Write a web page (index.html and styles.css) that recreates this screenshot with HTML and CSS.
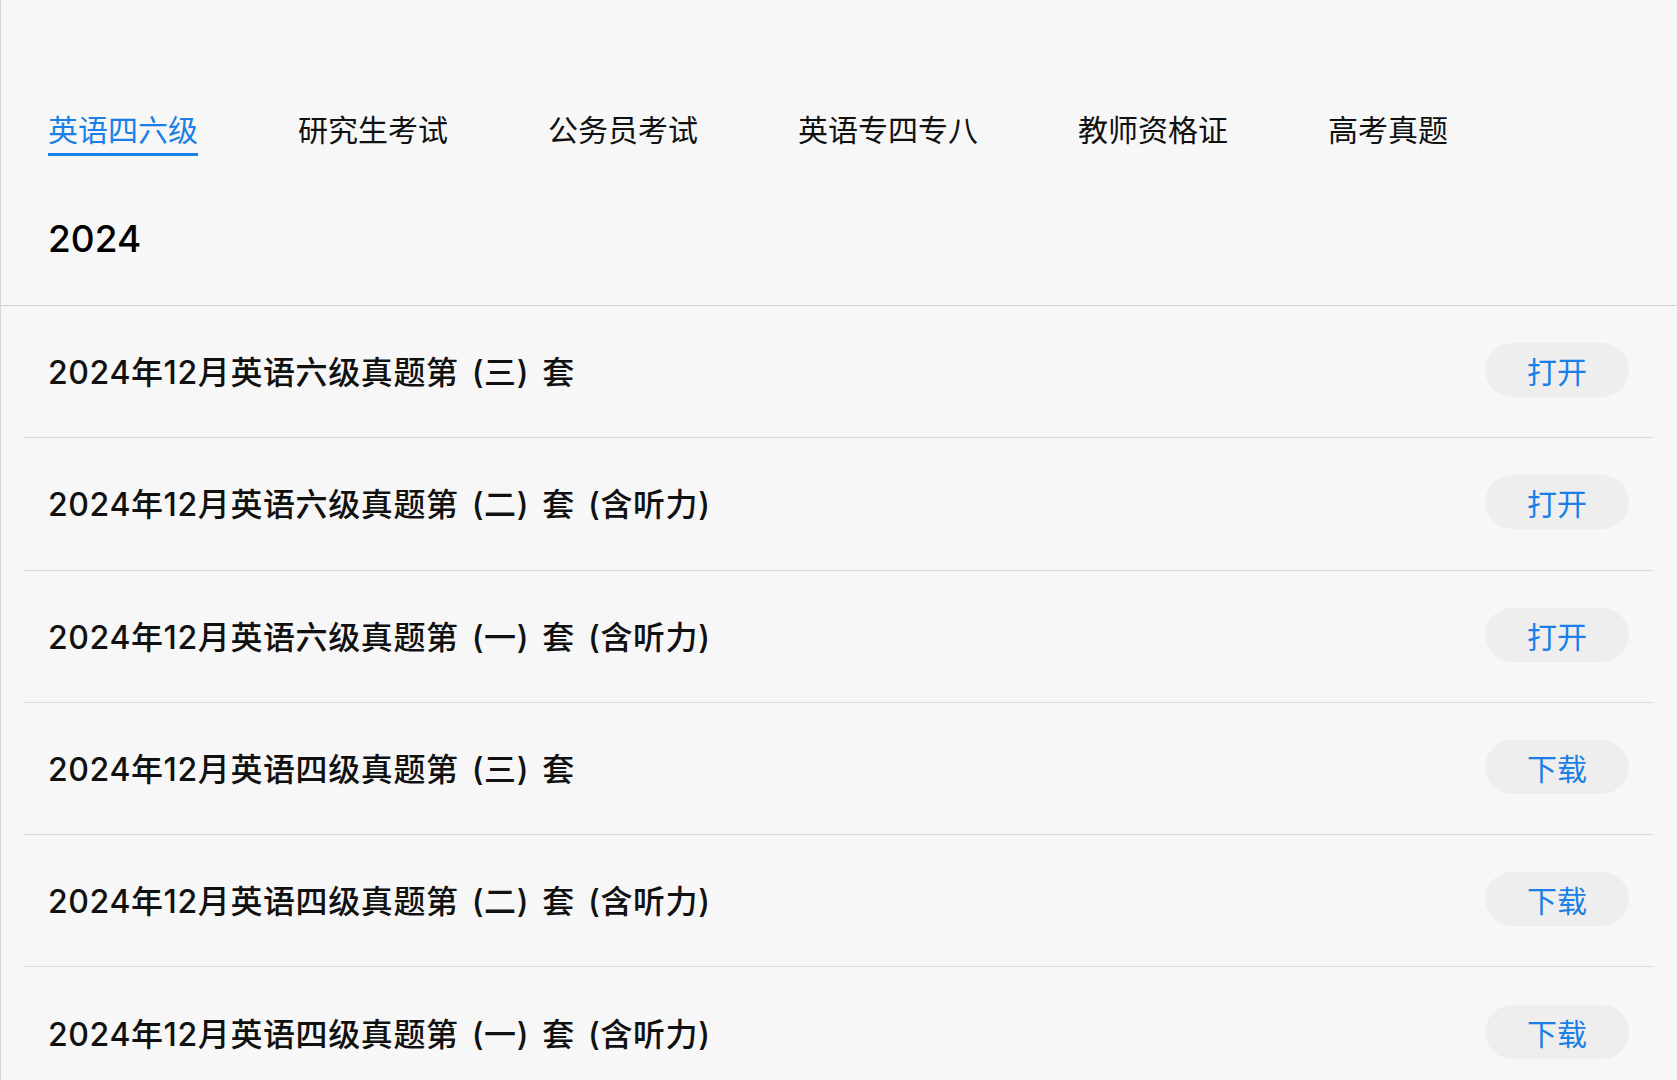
FILE: index.html
```html
<!DOCTYPE html>
<html lang="zh-CN">
<head>
<meta charset="utf-8">
<title>真题</title>
<link rel="stylesheet" href="styles.css">
</head>
<body>
<div class="page">
  <header class="header">
    <nav class="tabs">
      <span class="tab active">英语四六级</span>
      <span class="tab">研究生考试</span>
      <span class="tab">公务员考试</span>
      <span class="tab">英语专四专八</span>
      <span class="tab">教师资格证</span>
      <span class="tab">高考真题</span>
    </nav>
    <div class="year">2024</div>
  </header>
  <ul class="list">
    <li class="row"><span class="title">2024年12月英语六级真题第 (三) 套</span><span class="btn">打开</span></li>
    <li class="row"><span class="title">2024年12月英语六级真题第 (二) 套 (含听力)</span><span class="btn">打开</span></li>
    <li class="row"><span class="title">2024年12月英语六级真题第 (一) 套 (含听力)</span><span class="btn">打开</span></li>
    <li class="row"><span class="title">2024年12月英语四级真题第 (三) 套</span><span class="btn">下载</span></li>
    <li class="row"><span class="title">2024年12月英语四级真题第 (二) 套 (含听力)</span><span class="btn">下载</span></li>
    <li class="row"><span class="title">2024年12月英语四级真题第 (一) 套 (含听力)</span><span class="btn">下载</span></li>
  </ul>
</div>
</body>
</html>
```

FILE: styles.css
```css
* { box-sizing: border-box; }
html, body { margin: 0; padding: 0; }
body {
  background: #f7f7f7;
  color: #111;
  font-family: Inter, "Noto Sans CJK SC", sans-serif;
  overflow: hidden;
}
.page {
  min-height: 100vh;
  border-left: 1px solid #d6d6d6;
}
.header {
  border-bottom: 1px solid #cfcfcf;
  padding: 109px 0 41px 47px;
}
.tabs {
  display: flex;
  gap: 100px;
}
.tab {
  font-size: 30px;
  line-height: 42px;
  padding-bottom: 2px;
  border-bottom: 3px solid transparent;
  color: #111;
  white-space: nowrap;
}
.tab.active {
  color: #1a7fe6;
  border-bottom-color: #1a7fe6;
}
.year {
  margin-top: 58px;
  font-size: 37px;
  line-height: 50px;
  font-weight: 500;
  color: #000;
}
.list {
  list-style: none;
  margin: 0 24px 0 23px;
  padding: 0;
}
.row {
  display: flex;
  align-items: center;
  justify-content: space-between;
  height: 132.3px;
  padding: 0 24px 3px 24px;
  border-bottom: 1px solid #dadada;
}
.title {
  font-size: 32px;
  font-weight: 500;
  letter-spacing: 0.6px;
  word-spacing: 4px;
  color: #111;
  white-space: nowrap;
}
.btn {
  width: 144px;
  height: 54px;
  border-radius: 27px;
  background: #eeeeee;
  color: #1a7fe6;
  font-size: 30px;
  display: flex;
  align-items: center;
  justify-content: center;
}
```
